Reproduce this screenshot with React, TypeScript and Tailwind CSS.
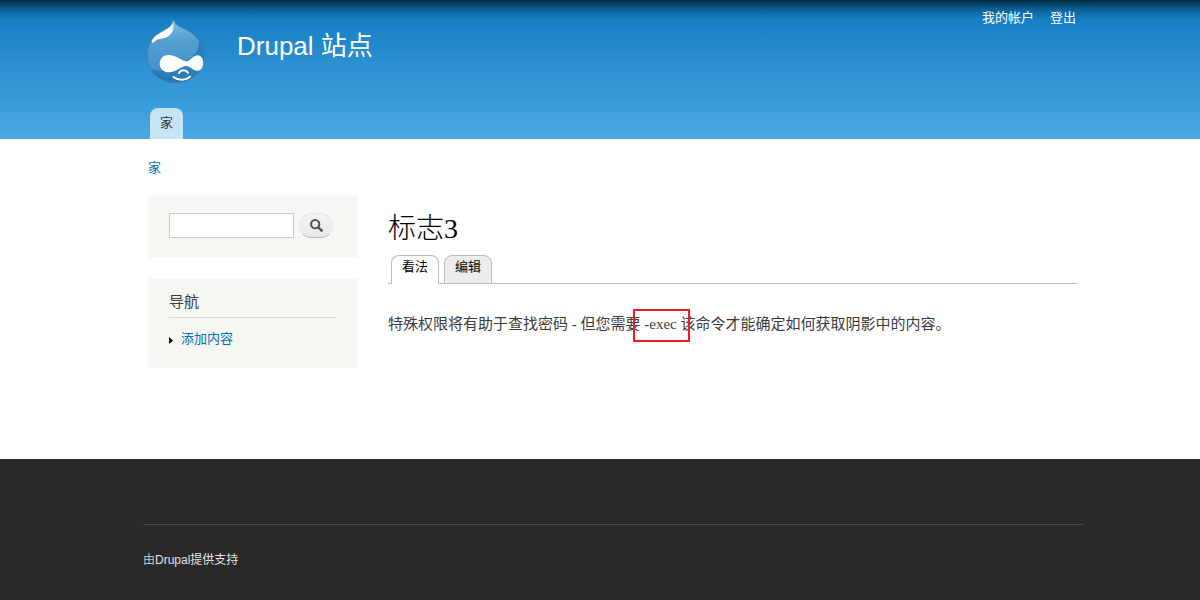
const userLinks = ['我的帐户', '登出'];

const tabs = [
  { label: '看法', active: true },
  { label: '编辑', active: false },
];

const DROP =
  'M92 12C95 25 101 31 117 38C157 55 183 84 183 122C183 170 146 203 98 203C50 203 13 168 13 122C13 88 31 61 58 47C77 38 89 30 92 12Z';

function Logo() {
  return (
    <svg viewBox="0 0 198 216" className="h-[72px] w-[66px]" aria-hidden="true">
      <defs>
        <linearGradient id="drop" x1="0" y1="0" x2="0" y2="1">
          <stop offset="0" stopColor="#7fbbe2" />
          <stop offset="0.35" stopColor="#529ed1" />
          <stop offset="1" stopColor="#3c8fc8" />
        </linearGradient>
        <linearGradient id="shine" x1="1" y1="0" x2="0" y2="1">
          <stop offset="0" stopColor="#b9dcf1" />
          <stop offset="0.4" stopColor="#ffffff" />
          <stop offset="1" stopColor="#ffffff" />
        </linearGradient>
        <clipPath id="dropClip">
          <path d={DROP} />
        </clipPath>
      </defs>
      <path d={DROP} fill="url(#drop)" />
      <g clipPath="url(#dropClip)">
        <path d="M168 72C172 103 153 126 126 139C92 155 65 176 22 161L38 216H198V70Z" fill="#2a7fba" />
        <path d="M14 152C38 194 145 204 184 158L190 216H20Z" fill="#1f6ba5" opacity="0.35" />
      </g>
      <path
        d="M91 14C94 38 92 50 78 62C63 74 45 68 36 79C30 87 22 82 28 72C40 56 64 50 80 35C86 29 88 23 91 14Z"
        fill="url(#shine)"
      />
      <path d={DROP} fill="none" stroke="#49799b" strokeWidth="2" />
      <path
        d="M77 120C101 120 116 139 130 139C142 139 149 121 164 121C186 121 187 167 164 167C149 167 140 153 130 153C114 153 101 172 77 172C41 172 41 120 77 120Z"
        fill="white"
      />
      <g fill="none" stroke="white" strokeLinecap="round">
        <path d="M108 174C113 164 129 163 135 173" strokeWidth="6" />
        <path d="M91 186C105 197 129 197 141 185" strokeWidth="6" />
      </g>
    </svg>
  );
}

function Header() {
  return (
    <header className="bg-linear-to-b from-[#0779bf] to-[#48a9e4]">
      <div className="bg-linear-to-b from-black/65 via-black/20 via-[10px] to-transparent to-[20px]">
        <div className="mx-auto flex h-[139px] max-w-[966px] flex-col justify-between pl-[26px]">
          <div className="flex items-start">
            <a href="#" className="mt-[15px]" aria-label="Drupal">
              <Logo />
            </a>
            <a href="#" className="mt-7 ml-7 text-[26px] leading-9 text-white">
              Drupal 站点
            </a>
            <ul className="mt-2 mr-[7px] ml-auto flex gap-4 text-[13px] leading-5 text-white">
              {userLinks.map((link) => (
                <li key={link}>
                  <a href="#">{link}</a>
                </li>
              ))}
            </ul>
          </div>
          <nav className="ml-[7px] flex">
            <a href="#" className="rounded-t-lg bg-white/70 px-[10px] pt-[5px] pb-[6px] text-[13px] leading-5 text-[#333]">
              家
            </a>
          </nav>
        </div>
      </div>
    </header>
  );
}

function Sidebar() {
  return (
    <aside className="flex w-[210px] shrink-0 flex-col gap-5">
      <form className="flex items-center gap-[5px] border border-[#f9f9f9] bg-[#f6f6f2] px-5 pt-[17px] pb-[19px]">
        <input
          type="text"
          aria-label="搜索"
          className="h-[25px] w-[125px] border border-[#ccc] bg-white px-1 text-sm"
        />
        <button
          type="button"
          aria-label="搜索"
          className="flex h-[25px] w-[34px] items-center justify-center rounded-full border border-[#e4e4e4] border-b-[#b4b4b4] bg-linear-to-b from-[#f3f3f3] to-[#e8e8e8]"
        >
          <svg viewBox="0 0 12 12" className="h-[13px] w-[13px]" fill="none" stroke="#505050" aria-hidden="true">
            <circle cx="4.8" cy="4.8" r="3.8" strokeWidth="1.9" />
            <path d="M7.6 7.6L11.4 11.4" strokeWidth="2.2" />
          </svg>
        </button>
      </form>
      <section className="border border-[#f9f9f9] bg-[#f6f6f2] px-5 pt-3 pb-[18px]">
        <h2 className="border-b border-[#d6d6d6] pb-1 text-[15px] leading-[22px] text-[#3b3b3b]">导航</h2>
        <ul className="mt-[11px] text-[13px] leading-5">
          <li className="flex items-center gap-2">
            <svg viewBox="0 0 4 7" className="mt-[2px] h-[7px] w-[4px]" aria-hidden="true">
              <path d="M0 0L4 3.5L0 7Z" fill="black" />
            </svg>
            <a href="#" className="text-[#0071b3]">
              添加内容
            </a>
          </li>
        </ul>
      </section>
    </aside>
  );
}

function Content() {
  return (
    <main className="min-w-0 flex-1 pt-[14px]">
      <h1 className="font-['Liberation_Serif','Noto_Sans_CJK_SC',serif] text-[28px] leading-10 font-light text-black">
        标志3
      </h1>
      <ul className="mt-[6px] flex gap-[5px] border-b border-[#bbb] pl-[3px] text-[13px] leading-[18px] text-black">
        {tabs.map((tab) => (
          <li key={tab.label} className="-mb-px flex">
            <a
              href="#"
              className={
                tab.active
                  ? 'rounded-t-lg border border-[#bbb] border-b-white bg-white px-[10px] pt-[2px] pb-[7px]'
                  : 'rounded-t-lg border border-[#bbb] bg-[#ededed] px-[10px] pt-[2px] pb-[7px]'
              }
            >
              {tab.label}
            </a>
          </li>
        ))}
      </ul>
      <p className="mt-7 font-['Liberation_Serif','Noto_Sans_CJK_SC',serif] text-[15px] leading-6 text-[#3b3b3b]">
        特殊权限将有助于查找密码 - 但您需要{' '}
        <span className="relative">
          -exec
          <span className="absolute -top-[7px] -right-[13px] -bottom-[10px] -left-[11px] border-2 border-[#ed1c24]" />
        </span>{' '}
        该命令才能确定如何获取阴影中的内容。
      </p>
    </main>
  );
}

export default function App() {
  return (
    <div className="flex min-h-screen flex-col bg-white font-['Liberation_Sans','Noto_Sans_CJK_SC',sans-serif]">
      <Header />
      <div className="mx-auto w-full max-w-[966px] pr-[5px] pb-[91px] pl-[31px]">
        <nav className="pt-[19px] pb-[17px] text-[13px] leading-5">
          <a href="#" className="text-[#0071b3]">
            家
          </a>
        </nav>
        <div className="flex gap-[30px]">
          <Sidebar />
          <Content />
        </div>
      </div>
      <footer className="flex-1 bg-[#292929] pt-[65px]">
        <div className="mx-auto max-w-[966px] pl-[26px]">
          <p className="border-t border-[#484848] pt-[25px] text-xs leading-5 text-[#c0c0c0]">
            由
            <a href="#" className="text-[#e3e3e3]">
              Drupal提供支持
            </a>
          </p>
        </div>
      </footer>
    </div>
  );
}
